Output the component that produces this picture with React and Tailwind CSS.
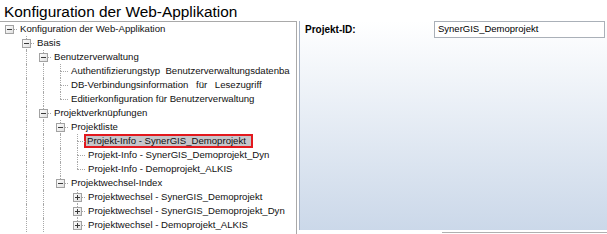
// Web-application configuration tree with a property panel on the right
const ROWS = [
  { level: 0, text: "Konfiguration der Web-Applikation", box: "minus", guides: [], root: true },
  { level: 1, text: "Basis", box: "minus", guides: [false] },
  { level: 2, text: "Benutzerverwaltung", box: "minus", guides: [false, true] },
  { level: 3, text: "Authentifizierungstyp  Benutzerverwaltungsdatenba", guides: [false, true, true] },
  { level: 3, text: "DB-Verbindungsinformation für Lesezugriff", guides: [false, true, true], wide: true },
  { level: 3, text: "Editierkonfiguration für Benutzerverwaltung", guides: [false, true, true], last: true },
  { level: 2, text: "Projektverknüpfungen", box: "minus", guides: [false, true] },
  { level: 3, text: "Projektliste", box: "minus", guides: [false, true, true] },
  { level: 4, text: "Projekt-Info - SynerGIS_Demoprojekt", guides: [false, true, true, true], selected: true },
  { level: 4, text: "Projekt-Info - SynerGIS_Demoprojekt_Dyn", guides: [false, true, true, true] },
  { level: 4, text: "Projekt-Info - Demoprojekt_ALKIS", guides: [false, true, true, true], last: true },
  { level: 3, text: "Projektwechsel-Index", box: "minus", guides: [false, true, true], last: true },
  { level: 4, text: "Projektwechsel - SynerGIS_Demoprojekt", box: "plus", guides: [false, true, true, false] },
  { level: 4, text: "Projektwechsel - SynerGIS_Demoprojekt_Dyn", box: "plus", guides: [false, true, true, false] },
  { level: 4, text: "Projektwechsel - Demoprojekt_ALKIS", box: "plus", guides: [false, true, true, false], last: true },
];

function Expander({ type }) {
  return (
    <svg className="absolute left-[5px] top-[3px]" width="9" height="9" viewBox="0 0 9 9">
      <defs>
        <linearGradient id="exp" x1="0" y1="0" x2="1" y2="1">
          <stop offset="0" stopColor="#ffffff" />
          <stop offset="1" stopColor="#dedede" />
        </linearGradient>
      </defs>
      <rect x="0.5" y="0.5" width="8" height="8" fill="url(#exp)" stroke="#a2a2a2" />
      <line x1="2" y1="4.5" x2="7" y2="4.5" stroke="#3a3a3a" />
      {type === "plus" && <line x1="4.5" y1="2" x2="4.5" y2="7" stroke="#3a3a3a" />}
    </svg>
  );
}

function TreeRow({ row }) {
  return (
    <div className="flex h-[14px] items-stretch">
      {row.guides.map((g, i) => (
        <div key={i} className="relative w-[17px] shrink-0">
          {g && <span className="absolute left-[9px] top-0 bottom-0 border-l border-dotted border-[#a8a8a8]" />}
        </div>
      ))}
      <div className="relative w-[17px] shrink-0">
        {!row.root && <span className="absolute left-[9px] top-0 h-[7px] border-l border-dotted border-[#a8a8a8]" />}
        {!row.root && !row.last && (
          <span className="absolute left-[9px] top-[7px] bottom-0 border-l border-dotted border-[#a8a8a8]" />
        )}
        <span className="absolute left-[9px] right-0 top-[7px] border-t border-dotted border-[#a8a8a8]" />
        {row.box && <Expander type={row.box} />}
      </div>
      <div
        className={
          row.selected
            ? "-ml-[1px] h-[14px] border-2 border-[#e3191e] bg-[#c6c6ca] pl-[1px] pr-[5px] leading-[10px] whitespace-pre"
            : "ml-[1px] pl-[2px] leading-[14px] whitespace-pre " + (row.wide ? "[word-spacing:5px]" : "")
        }
      >
        {row.text}
      </div>
    </div>
  );
}

export default function App() {
  return (
    <div className="w-[607px] h-[234px] overflow-hidden bg-white font-['Liberation_Sans',Arial,sans-serif] text-[#111]">
      <h1 className="h-[21px] pl-[4px] pt-[3px] text-[15.4px] leading-[18px] text-black">
        Konfiguration der Web-Applikation
      </h1>
      <div className="flex h-[213px]">
        <div className="w-[297px] shrink-0 overflow-hidden border-t border-r border-[#a9a9a9] text-[9.6px]">
          {ROWS.map((row, i) => (
            <TreeRow key={i} row={row} />
          ))}
        </div>
        <div className="flex flex-1 flex-col">
          <div className="ml-[2px] flex h-[209px] items-start border-l border-[#a8b4c6] bg-linear-to-b from-white to-[#cbd8e9]">
            <div className="flex h-[17px] w-full items-center">
              <span className="ml-[5px] w-[128px] text-[10px] font-bold text-black">Projekt-ID:</span>
              <div className="ml-[1px] flex h-[17px] w-[171px] items-center border border-[#aab0b8] bg-white pl-[3px] text-[9.5px] text-black">
                SynerGIS_Demoprojekt
              </div>
            </div>
          </div>
          <div className="ml-[145px] mt-[2px] border-t border-[#b0b0b0]" />
        </div>
      </div>
    </div>
  );
}
